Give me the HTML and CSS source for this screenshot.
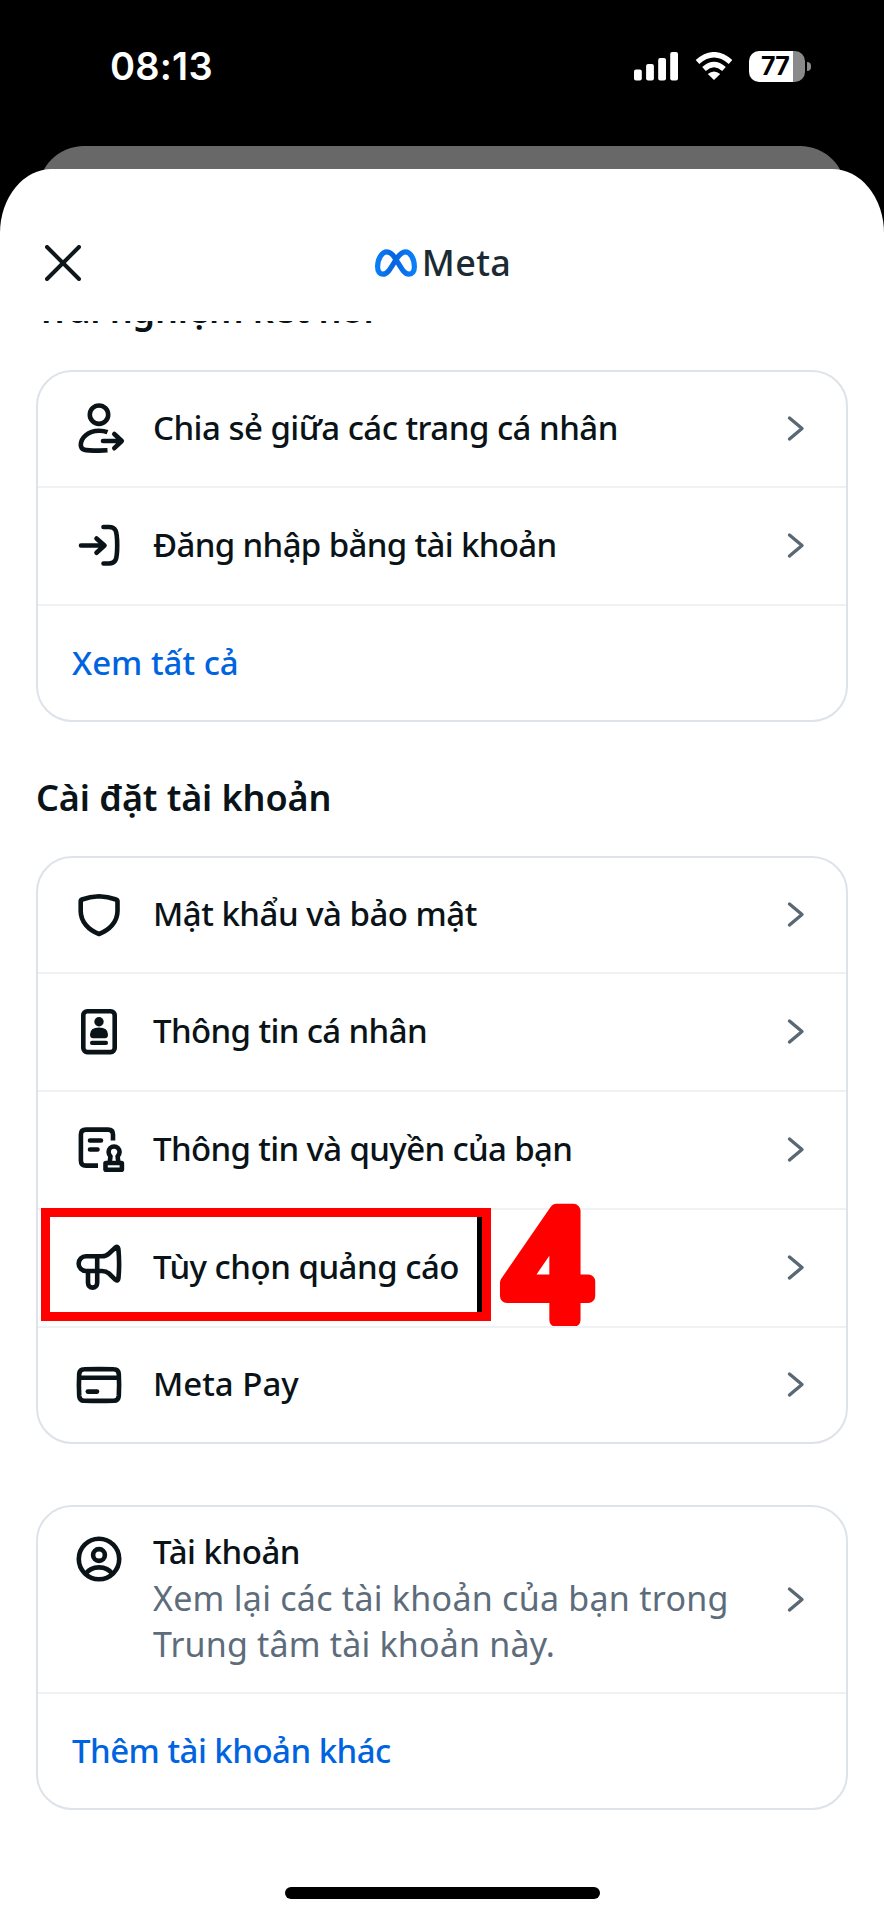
FILE: index.html
```html
<!DOCTYPE html>
<html lang="vi">
<head>
<meta charset="utf-8">
<title>Trung tâm tài khoản</title>
<link rel="stylesheet" href="styles.css">
</head>
<body>
<div class="phone">
  <header class="status">
    <span class="clock">08:13</span>
    <div class="indicators">
      <svg class="signal" viewBox="0 0 44 29"><rect x="0" y="17.5" width="7.8" height="11" rx="2"/><rect x="12.1" y="12" width="7.8" height="16.5" rx="2"/><rect x="24.2" y="6" width="7.8" height="22.5" rx="2"/><rect x="36.2" y="0" width="7.8" height="28.5" rx="2"/></svg>
      <svg class="wifi" viewBox="0 0 38 28"><path d="M2.500 10Q19-4.500 35.500 10M9 17Q19 8 29 17" fill="none" stroke="#fff" stroke-width="5.400"/><path d="M12.800 22Q19 17 25.200 22L19 28Z" fill="#fff"/></svg>
      <div class="battery"><span class="level">77</span><span class="nub"></span></div>
    </div>
  </header>
  <div class="backsheet"></div>
  <main class="sheet">
    <div class="topbar">
      <svg class="close" viewBox="0 0 36 36"><path d="M2 2L34 34M34 2L2 34"/></svg>
      <div class="brand">
        <svg class="logo" viewBox="0 0 42 28"><defs><linearGradient id="mg" x1="0" x2="1" y1="0" y2="0"><stop offset="0" stop-color="#0a7cf5"/><stop offset=".45" stop-color="#0764e0"/><stop offset="1" stop-color="#0a7ff8"/></linearGradient></defs><path d="M21 10.500C17.500 4.500 15 2.800 11.800 2.800C6.800 2.800 2.600 10 2.600 17.500C2.600 22.500 4.700 25.200 8 25.200C12 25.200 14.500 21.500 21 10.500C25 4.500 27.200 2.800 30.200 2.800C35.500 2.800 39.400 10 39.400 17.800C39.400 22.600 37.300 25.200 34 25.200C29.500 25.200 27.500 21 21 10.500Z"/></svg>
        <span class="brandname">Meta</span>
      </div>
    </div>
    <div class="clip"><h2 class="heading">Trải nghiệm kết nối</h2></div>

    <section class="card">
      <a class="row">
        <svg class="icon" viewBox="0 0 56 56"><circle cx="28" cy="13.700" r="9.200"/><path d="M36.500 31.200C34 30.200 31 29.700 28 29.700C17 29.700 9.800 37 9.800 44C9.800 49 13 49.600 28 49.600L36.500 49.200"/><path class="cap" d="M32 40H50.500M43.300 33L50.800 40L43.300 47.200"/></svg>
        <span class="label ls-share">Chia sẻ giữa các trang cá nhân</span>
        <svg class="chev" viewBox="0 0 24 28"><path d="M5.500 3L18 13.500L5.500 24"/></svg>
      </a>
      <a class="row">
        <svg class="icon" viewBox="0 0 56 56"><path class="cap" d="M10 27.500H33M25.500 20.500L33.500 27.500L25.500 34.800M32.500 9H38C44.500 9 46.200 12 46.200 27.200S44.500 45.500 38 45.500H32.500"/></svg>
        <span class="label ls-tight">Đăng nhập bằng tài khoản</span>
        <svg class="chev" viewBox="0 0 24 28"><path d="M5.500 3L18 13.500L5.500 24"/></svg>
      </a>
      <a class="row link"><span class="label">Xem tất cả</span></a>
    </section>

    <h2 class="heading section-title">Cài đặt tài khoản</h2>

    <section class="card settings">
      <a class="row">
        <svg class="icon" viewBox="0 0 56 56"><path d="M28 9.200Q37 9.400 45 12.500Q46.500 13 46.500 14.500V24C46.500 35 38 43.500 28 47C18 43.500 9.700 35 9.700 24V14.500Q9.700 13 11 12.500Q19 9.400 28 9.200Z"/></svg>
        <span class="label ls-mid">Mật khẩu và bảo mật</span>
        <svg class="chev" viewBox="0 0 24 28"><path d="M5.500 3L18 13.500L5.500 24"/></svg>
      </a>
      <a class="row">
        <svg class="icon" viewBox="0 0 56 56"><rect x="12.300" y="7.300" width="31.400" height="40.800" rx="4"/><g class="solid"><circle cx="28" cy="17.700" r="4.700"/><path d="M19 30.500Q19 23.500 28 23.500Q37 23.500 37 30.500Q37 34.300 34 34.300H22Q19 34.300 19 30.500Z"/><rect x="19" y="36.800" width="18" height="4.200" rx="2"/></g></svg>
        <span class="label ls-info">Thông tin cá nhân</span>
        <svg class="chev" viewBox="0 0 24 28"><path d="M5.500 3L18 13.500L5.500 24"/></svg>
      </a>
      <a class="row">
        <svg class="icon" viewBox="0 0 56 56"><path d="M42 18.500V12.500Q42 7.600 37 7.600H15Q9.900 7.600 9.900 12.600V38.400Q9.900 43.600 15 43.600H27"/><path class="cap" d="M19 18.500H30M19 27.500H26.500"/><path d="M38.500 41L39.500 34.500Q37.600 32 37.600 30a5.500 5.500 0 0 1 11 0Q48.600 32 46.600 34.500L47.500 41"/><rect x="34.500" y="41" width="16.400" height="6.800" rx=".5"/></svg>
        <span class="label ls-tight">Thông tin và quyền của bạn</span>
        <svg class="chev" viewBox="0 0 24 28"><path d="M5.500 3L18 13.500L5.500 24"/></svg>
      </a>
      <a class="row">
        <svg class="icon" viewBox="0 0 56 56"><path d="M17 31V43a4.600 4.600 0 0 0 9.200 0V16.300M17 31H31Q35 31 38 33.500L44.500 39.800Q47 41.800 47.400 38.500Q48.800 24 47.400 9Q47 5.800 44.500 7.500L38 13.500Q35 16.300 31 16.300H15a7.350 7.350 0 0 0 0 14.700H17"/></svg>
        <span class="label ls-ads">Tùy chọn quảng cáo</span>
        <svg class="chev" viewBox="0 0 24 28"><path d="M5.500 3L18 13.500L5.500 24"/></svg>
        <span class="highlight"></span>
        <svg class="step" viewBox="0 0 110 140"><text x="8" y="124">4</text></svg>
      </a>
      <a class="row">
        <svg class="icon" viewBox="0 0 56 56"><path d="M13 12.300Q28 11.900 43 12.300Q47.400 12.300 47.800 17Q48.400 28 47.800 39Q47.400 43.700 43 43.700Q28 44.100 13 43.700Q8.600 43.700 8.200 39Q7.600 28 8.200 17Q8.600 12.300 13 12.300ZM8 20.800H48"/><path class="cap" d="M16.800 34.600H26"/></svg>
        <span class="label">Meta Pay</span>
        <svg class="chev" viewBox="0 0 24 28"><path d="M5.500 3L18 13.500L5.500 24"/></svg>
      </a>
    </section>

    <section class="card accounts">
      <a class="row tall">
        <svg class="icon" viewBox="0 0 56 56"><circle cx="28" cy="28" r="20.200"/><circle cx="28" cy="24" r="5.900"/><path d="M14.500 43Q19 36.400 28 36.400T41.500 43"/></svg>
        <span class="copy">
          <span class="ls-ads">Tài khoản</span>
          <span class="sub">Xem lại các tài khoản của bạn trong</span>
          <span class="sub second">Trung tâm tài khoản này.</span>
        </span>
        <svg class="chev" viewBox="0 0 24 28"><path d="M5.500 3L18 13.500L5.500 24"/></svg>
      </a>
      <a class="row link"><span class="label ls-share">Thêm tài khoản khác</span></a>
    </section>
    <div class="homebar"></div>
  </main>
</div>
</body>
</html>
```
FILE: styles.css
```css
* { box-sizing: border-box; }
body { margin: 0; background: #000; font-family: "Noto Sans", sans-serif; }
.phone { width: 884px; height: 1916px; overflow: hidden; background: #000; display: flex; flex-direction: column; }

.status { height: 146px; flex: none; padding: 48px 73px 0 110px; display: flex; justify-content: space-between; align-items: flex-start; }
.clock { font: 600 38px/36px Inter, sans-serif; color: #fff; letter-spacing: 0.2px; }
.indicators { display: flex; align-items: center; height: 36px; }
.signal { width: 44px; height: 29px; fill: #fff; margin-right: 17px; }
.wifi { width: 38px; height: 28px; margin-right: 16px; }
.battery { position: relative; width: 56px; height: 31px; border-radius: 10px; background: linear-gradient(90deg, #fff 44px, #8a8a8a 44px); margin-right: 6px; }
.level { position: absolute; left: 12px; top: 0; font: 700 25px/31px Inter, sans-serif; color: #000; letter-spacing: -0.8px; }
.nub { position: absolute; left: 58px; top: 11px; width: 3.5px; height: 9px; border-radius: 0 4px 4px 0; background: #8a8a8a; }

.backsheet { flex: none; height: 60px; margin: 0 38px -37px; border-radius: 46px 46px 0 0; background: #686868; }
.sheet { position: relative; flex: 1; background: #fff; border-radius: 52px 52px 0 0 / 64px 64px 0 0; display: flex; flex-direction: column; }
.topbar { height: 152px; flex: none; padding: 76px 45px 0; display: grid; grid-template-columns: 36px 1fr 36px; align-items: start; }
.close { width: 36px; height: 36px; stroke: #0e171b; stroke-width: 4; stroke-linecap: round; }
.brand { display: flex; justify-content: center; align-items: center; height: 36px; gap: 5px; padding-left: 2px; }
.logo { width: 42px; height: 28px; fill: none; stroke: url(#mg); stroke-width: 5.200; }
.brandname { font-size: 36px; line-height: 36px; font-weight: 500; color: #1c2b33; letter-spacing: 0.3px; }

.clip { height: 49px; flex: none; overflow: hidden; display: flex; align-items: flex-start; }
.heading { margin: 0 0 0 36px; font-size: 36px; line-height: 44px; font-weight: 600; color: #0a1317; letter-spacing: -0.1px; white-space: nowrap; }
.clip .heading { margin-top: -33px; }
.section-title { margin-top: 54px; height: 80px; }

.card { flex: none; margin: 0 36px; border: 2px solid #dde3e8; border-radius: 36px; }
.row { position: relative; display: flex; align-items: center; height: 118px; border-top: 2px solid #eef2f4; padding: 0 38px 0 33px; font-size: 33px; line-height: 46px; font-weight: 500; color: #0a1317; white-space: nowrap; }
.row:first-child { height: 114px; border-top: 0; }
.row:last-child { height: 116px; }
.icon { flex: none; width: 56px; height: 56px; fill: none; stroke: #0a1317; stroke-width: 4.600; stroke-linejoin: round; margin-right: 26px; }
.cap { stroke-linecap: round; }
.solid { fill: #0a1317; stroke: none; }
.label { padding-bottom: 3px; }
.link .label { padding-bottom: 1px; }
.chev { flex: none; margin-left: auto; width: 24px; height: 28px; fill: none; stroke: #5a6873; stroke-width: 3.400; stroke-linecap: round; stroke-linejoin: round; }
.link { color: #0064e0; padding-left: 34px; }
.ls-share { letter-spacing: -0.52px; }
.ls-tight { letter-spacing: -0.64px; }
.ls-mid { letter-spacing: -0.5px; }
.ls-info { letter-spacing: -0.62px; }
.ls-ads { letter-spacing: -0.5px; }
.accounts { margin-top: 61px; }
.row.tall { height: 185px; }
.tall .icon { align-self: flex-start; margin-top: 24px; }
.copy { display: flex; flex-direction: column; align-items: flex-start; padding-bottom: 4px; }
.sub { color: #5d6c7b; font-weight: 400; font-size: 34px; letter-spacing: 0.26px; }
.second { letter-spacing: 0.18px; }

/* callout drawn over the list */
.highlight { position: absolute; left: 3px; top: -2px; width: 450px; height: 113px; border: 9px solid #f00; box-shadow: inset -5px 0 0 #000; }
.step { position: absolute; left: 458px; top: -14px; width: 110px; height: 140px; overflow: visible; }
.step text { font: 600 152px "Open Sans", sans-serif; fill: #f00; stroke: #f00; stroke-width: 14; stroke-linejoin: round; }
.homebar { width: 315px; height: 12px; border-radius: 6px; background: #000; margin: 77px auto 0; }
```
